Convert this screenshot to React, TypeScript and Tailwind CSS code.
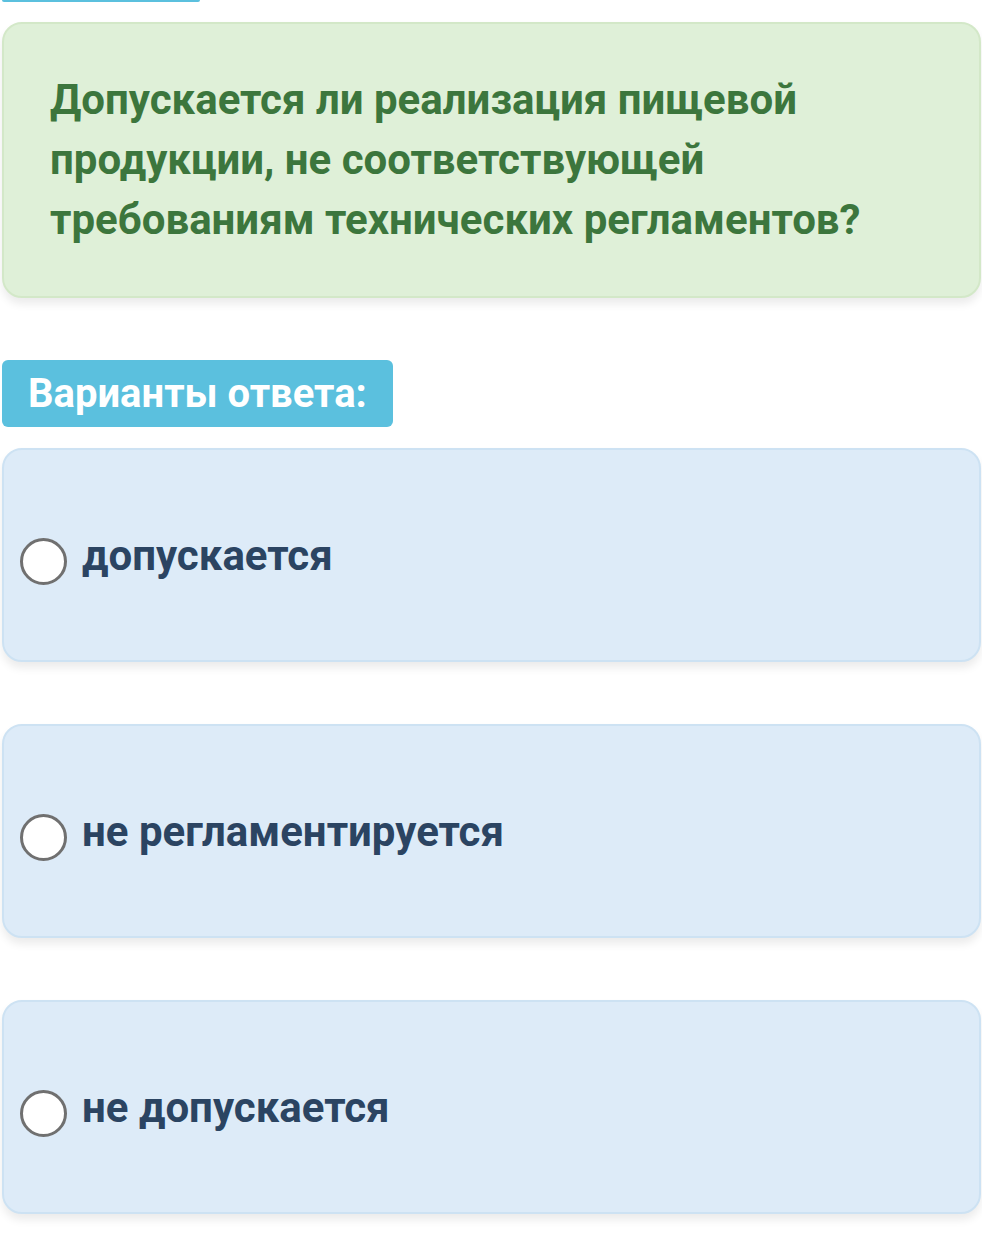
const options = ["допускается", "не регламентируется", "не допускается"];

export default function App() {
  return (
    <div className="min-h-screen bg-white pl-[2px] pr-[1px] font-['Roboto',sans-serif]">
      <div className="h-[2px] w-[198px] rounded-b bg-[#5bc0de]" />

      <div className="mt-[20px] rounded-[20px] border-2 border-[#d3e8c8] bg-[#dff0d8] px-[46px] py-[46px] shadow-[0_6px_8px_rgba(0,0,0,0.08)]">
        <p className="text-[42px] font-bold leading-[60px] text-[#3c763d]">
          Допускается ли реализация пищевой продукции, не соответствующей требованиям технических регламентов?
        </p>
      </div>

      <div className="mt-[62px] inline-flex h-[67px] items-center rounded-md bg-[#5bc0de] px-[26px]">
        <span className="text-[40px] font-bold text-white">Варианты ответа:</span>
      </div>

      <div className="mt-[21px] flex flex-col gap-[62px]">
        {options.map((opt) => (
          <div
            key={opt}
            className="flex h-[214px] items-center gap-[15px] rounded-[20px] border-2 border-[#cde2f3] bg-[#ddebf8] pl-[16px] shadow-[0_6px_8px_rgba(0,0,0,0.08)]"
          >
            <span className="mt-[12px] h-[47px] w-[47px] shrink-0 rounded-full border-[3px] border-[#707070] bg-white" />
            <span className="text-[42px] font-bold text-[#2b4462]">{opt}</span>
          </div>
        ))}
      </div>
    </div>
  );
}
